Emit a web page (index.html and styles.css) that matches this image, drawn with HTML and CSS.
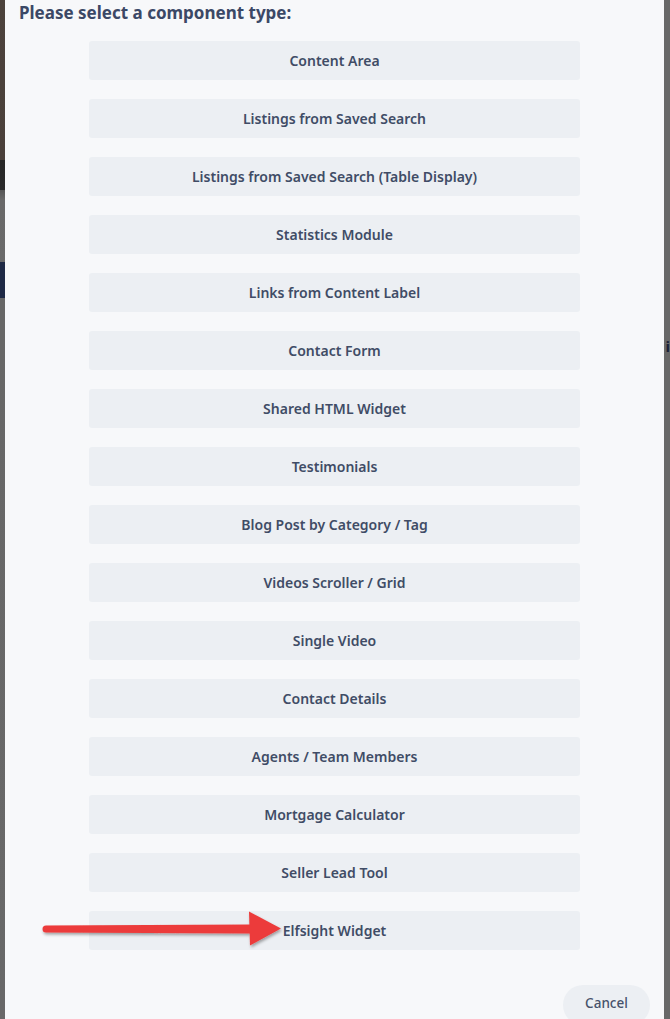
FILE: index.html
```html
<!DOCTYPE html>
<html lang="en">
<head>
<meta charset="utf-8">
<title>Select component type</title>
<link rel="stylesheet" href="styles.css">
</head>
<body>
<div class="backdrop">
  <span class="behind-i">i</span>
  <div class="modal">
    <h2 class="modal-title">Please select a component type:</h2>
    <div class="options">
      <button class="option">Content Area</button>
      <button class="option">Listings from Saved Search</button>
      <button class="option">Listings from Saved Search (Table Display)</button>
      <button class="option">Statistics Module</button>
      <button class="option">Links from Content Label</button>
      <button class="option">Contact Form</button>
      <button class="option">Shared HTML Widget</button>
      <button class="option">Testimonials</button>
      <button class="option">Blog Post by Category / Tag</button>
      <button class="option">Videos Scroller / Grid</button>
      <button class="option">Single Video</button>
      <button class="option">Contact Details</button>
      <button class="option">Agents / Team Members</button>
      <button class="option">Mortgage Calculator</button>
      <button class="option">Seller Lead Tool</button>
      <button class="option">Elfsight Widget</button>
    </div>
    <div class="footer">
      <button class="cancel">Cancel</button>
    </div>
    <svg class="arrow" width="260" height="50" viewBox="0 0 260 50" aria-hidden="true">
      <defs>
        <filter id="sh" x="-10%" y="-40%" width="120%" height="180%">
          <feDropShadow dx="1" dy="2" stdDeviation="1.6" flood-color="#000" flood-opacity="0.35"/>
        </filter>
      </defs>
      <g filter="url(#sh)" fill="#ec3b3b">
        <path d="M11 22.5 L216 21.5 L216 30.5 L11 29.5 A3.5 3.5 0 0 1 11 22.5 Z"/>
        <path d="M214 8.5 L246 25.5 L215 42.5 Z"/>
      </g>
    </svg>
  </div>
</div>
</body>
</html>
```

FILE: styles.css
```css
html, body {
  margin: 0;
  padding: 0;
}
body {
  width: 670px;
  height: 1019px;
  overflow: hidden;
  font-family: "Noto Sans", "Open Sans", sans-serif;
}
.backdrop {
  position: relative;
  height: 1019px;
  display: flex;
  background:
    linear-gradient(to bottom,
      #4c423c 0px, #4a403a 160px,
      #262626 160px, #2a2a2a 190px,
      #555 190px, #696969 200px, #6a6a6a 262px,
      #1e2945 262px, #1e2945 298px,
      #676767 298px, #686868 1019px) left top / 5px 100% no-repeat,
    #686868;
}
.behind-i {
  position: absolute;
  right: 0;
  top: 336px;
  font: 700 15px "Noto Sans", sans-serif;
  color: #1c2236;
}
.modal {
  position: relative;
  margin-left: 5px;
  width: 659px;
  height: 1019px;
  background: #f7f8fa;
  box-sizing: border-box;
  padding: 0 14px;
  display: flex;
  flex-direction: column;
}
.modal-title {
  margin: 1px 0 0 0;
  font-size: 17px;
  line-height: 24px;
  font-weight: 700;
  color: #3b4866;
}
.options {
  display: flex;
  flex-direction: column;
  align-items: center;
  gap: 19px;
  margin-top: 16px;
}
.option {
  width: 491px;
  height: 39px;
  border: none;
  border-radius: 3px;
  background: #eceff3;
  color: #404c66;
  font-family: "Noto Sans", "Open Sans", sans-serif;
  font-size: 14px;
  font-weight: 600;
  padding: 0 0 1px 0;
  cursor: pointer;
}
.footer {
  display: flex;
  justify-content: flex-end;
  margin-top: 35px;
}
.cancel {
  width: 87px;
  height: 40px;
  border: none;
  border-radius: 20px;
  background: #eceff3;
  color: #46526b;
  font-family: "Noto Sans", "Open Sans", sans-serif;
  font-size: 13.5px;
  font-weight: 500;
  padding: 0 0 4px 0;
}
.arrow {
  position: absolute;
  left: 30px;
  top: 903px;
}
```
